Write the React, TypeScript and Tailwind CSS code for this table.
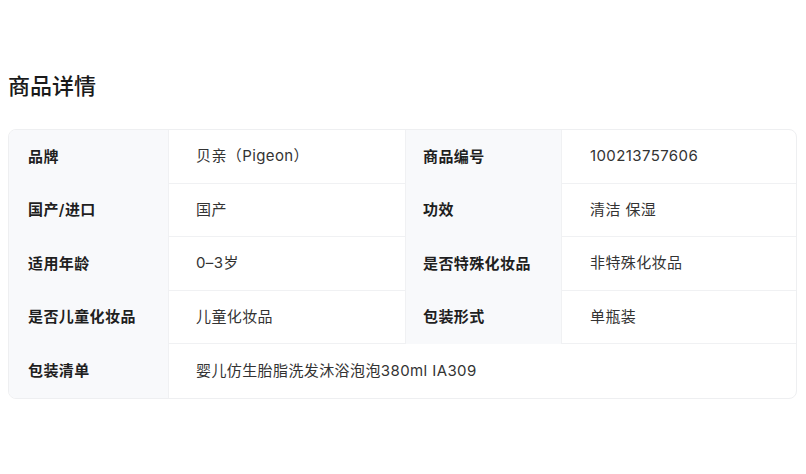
import React from "react";

const rows: [string, string, string?, string?][] = [
  ["品牌", "贝亲（Pigeon）", "商品编号", "100213757606"],
  ["国产/进口", "国产", "功效", "清洁 保湿"],
  ["适用年龄", "0–3岁", "是否特殊化妆品", "非特殊化妆品"],
  ["是否儿童化妆品", "儿童化妆品", "包装形式", "单瓶装"],
  ["包装清单", "婴儿仿生胎脂洗发沐浴泡泡380ml IA309"],
];

export default function App() {
  return (
    <div
      className="w-[806px] h-[474px] bg-white"
      style={{ fontFamily: '"Inter", "Noto Sans CJK SC", sans-serif' }}
    >
      <div className="pt-[71px] px-[8px]">
        <h2 className="text-[22px] leading-[30px] font-medium text-[#1a1a1a]">商品详情</h2>
        <div className="mt-[28px] w-[789px] rounded-[8px] border border-[#eeeff1] overflow-hidden tracking-[0.4px]">
          {rows.map((r, i) => (
            <div key={i} className="flex h-[53.5px]">
              <div className="w-[160px] shrink-0 bg-[#f8f9fb] flex items-center pl-[19px] text-[15px] font-semibold text-[#1f1f1f] border-r border-[#f0f1f3]">
                {r[0]}
              </div>
              {r[2] !== undefined ? (
                <>
                  <div className="w-[236px] shrink-0 flex items-center pl-[27px] text-[15px] text-[#333] border-b border-[#f0f1f3]">
                    {r[1]}
                  </div>
                  <div className="w-[157px] shrink-0 bg-[#f8f9fb] flex items-center pl-[17px] text-[15px] font-semibold text-[#1f1f1f] border-l border-r border-[#f0f1f3]">
                    {r[2]}
                  </div>
                  <div className="flex-1 flex items-center pl-[28px] text-[15px] text-[#333] border-b border-[#f0f1f3]">
                    {r[3]}
                  </div>
                </>
              ) : (
                <div className="flex-1 flex items-center pl-[27px] text-[15px] text-[#333]">
                  {r[1]}
                </div>
              )}
            </div>
          ))}
        </div>
      </div>
    </div>
  );
}
